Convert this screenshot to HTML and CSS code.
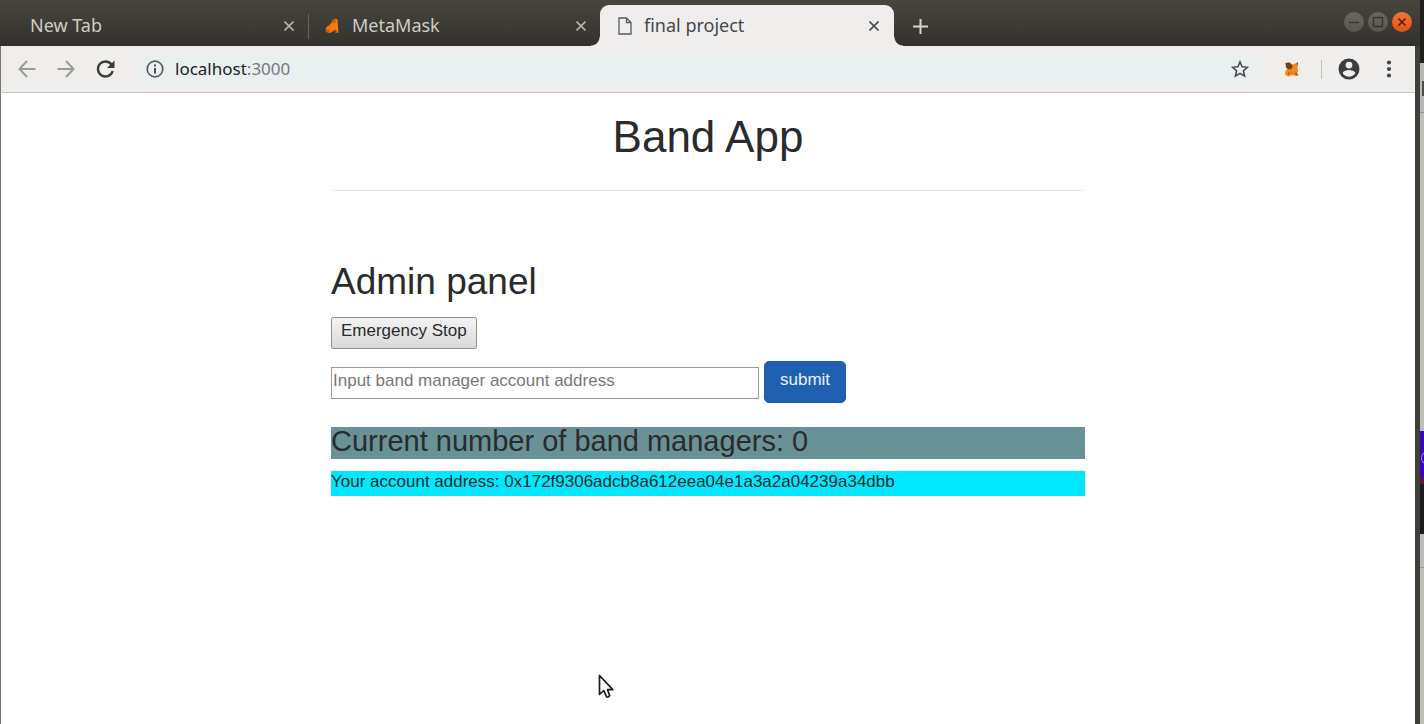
FILE: index.html
```html
<!DOCTYPE html>
<html lang="en">
<head>
<meta charset="utf-8">
<title>final project</title>
<link rel="stylesheet" href="styles.css">
</head>
<body>
<div class="desktop">
  <div class="window">
    <header class="titlebar">
      <nav class="tabs" aria-label="Tabs">
        <div class="tab tab-first">
          <span class="tab-title">New Tab</span>
          <button class="tab-close" aria-label="Close New Tab"><svg width="10" height="10" viewBox="0 0 10 10"><path d="M.5.5l9 9M9.5.5l-9 9"/></svg></button>
        </div>
        <div class="tab tab-divided">
          <svg class="favicon" width="16" height="16" viewBox="0 0 16 16"><path fill="#f57c0a" d="M11.500.5l2 1 .5 7 .5 6.500-3-.5-2.500-1.500-3 2-4-1-.5-3 2-3 4-3 1.500-3z"/><path fill="#c65a0a" d="M11.500.5L8 2.500 7 5.500l5-1zM2 11l4 1-1 2.500-3-1z"/><path fill="#7a3a10" d="M9 13l2-1.500 2.500 3-2.500-.5zM3.500 8l2-1.500.5 1.500z"/></svg>
          <span class="tab-title">MetaMask</span>
          <button class="tab-close" aria-label="Close MetaMask"><svg width="10" height="10" viewBox="0 0 10 10"><path d="M.5.5l9 9M9.5.5l-9 9"/></svg></button>
        </div>
        <div class="tab tab-active">
          <svg class="favicon" width="14" height="18" viewBox="0 0 14 18"><path fill="none" stroke="#5a5a5c" stroke-width="1.300" d="M1 1h7.500L13 5.500V17H1zM8.500 1v4.500H13"/></svg>
          <span class="tab-title">final project</span>
          <button class="tab-close" aria-label="Close final project"><svg width="10" height="10" viewBox="0 0 10 10"><path d="M.5.5l9 9M9.5.5l-9 9"/></svg></button>
        </div>
      </nav>
      <button class="new-tab" aria-label="New tab"><svg width="15" height="15" viewBox="0 0 15 15"><path stroke="#d8d6ce" stroke-width="2" d="M7.500 0v15M0 7.500h15"/></svg></button>
      <div class="window-controls">
        <button class="control" aria-label="Minimize"><svg width="20" height="20" viewBox="0 0 20 20"><path stroke="#34332e" stroke-width="1.300" d="M5 10.500h10"/></svg></button>
        <button class="control" aria-label="Maximize"><svg width="20" height="20" viewBox="0 0 20 20"><path fill="none" stroke="#34332e" stroke-width="1.400" d="M5.500 5.500h9v9h-9z"/></svg></button>
        <button class="control control-close" aria-label="Close window"><svg width="20" height="20" viewBox="0 0 20 20"><path stroke="#4a2114" stroke-width="1.600" d="M6.500 6.500l7 7M13.500 6.500l-7 7"/></svg></button>
      </div>
    </header>
    <div class="toolbar">
      <button class="tool" aria-label="Back"><svg width="18" height="18" viewBox="0 0 18 18"><path fill="none" stroke="#9a9a99" stroke-width="2" d="M17.500 9H2M9 1L1.500 9 9 17"/></svg></button>
      <button class="tool" aria-label="Forward"><svg width="18" height="18" viewBox="0 0 18 18"><path fill="none" stroke="#9a9a99" stroke-width="2" d="M.5 9H16M9 1l7.500 8L9 17"/></svg></button>
      <button class="tool" aria-label="Reload"><svg width="19" height="18" viewBox="0 0 19 18"><path fill="none" stroke="#3b3b3a" stroke-width="2.400" d="M15.500 4.500A7.500 7.500 0 1 0 16.700 11"/><path fill="#3b3b3a" d="M18.500.5v7.500H11z"/></svg></button>
      <div class="address">
        <svg class="info" width="18" height="18" viewBox="0 0 18 18"><circle cx="9" cy="9" r="7.800" fill="none" stroke="#5a5b5d" stroke-width="1.700"/><path stroke="#4b4c4e" stroke-width="2" d="M9 8v5.500M9 4.500v2"/></svg>
        <a class="url" href="#"><span class="url-host">localhost</span>:3000</a>
        <button class="tool star" aria-label="Bookmark"><svg width="18" height="18" viewBox="0 0 18 18"><path fill="none" stroke="#4c4d4f" stroke-width="1.600" d="M9 1.800l2.100 5 5.400.5-4.100 3.600 1.200 5.300L9 13.400l-4.600 2.800 1.200-5.300L1.500 7.300l5.400-.5z"/></svg></button>
      </div>
      <button class="tool" aria-label="MetaMask"><svg width="16" height="16" viewBox="0 0 16 16"><path fill="#f5841f" d="M1.500 2l4-.5 3 2 5.500-2-.5 6 .5 3-1 1 1.500 3.500-4-.5-3-.5-3 1.500-3-1.500-.5-3 2-3z"/><path fill="#763d16" d="M1.500 2l4-.5 3 3-.5 3-3 1-3-2zM12.500 2l1.500-.5-.5 3z"/><path fill="#c65a0a" d="M4 11l3 1.500-3 1.500zM11 11.500l2 0 1 3-3-.5z"/></svg></button>
      <span class="divider"></span>
      <button class="tool" aria-label="Profile"><svg width="22" height="22" viewBox="0 0 22 22"><path fill="#3c3c3e" fill-rule="evenodd" d="M11 .5a10.500 10.500 0 1 0 0 21 10.500 10.500 0 0 0 0-21zm0 3.200a3.400 3.400 0 1 1 0 6.800 3.400 3.400 0 0 1 0-6.800zm0 15c-2.600 0-4.900-1.300-6.300-3.400.1-2 4.200-3.200 6.300-3.200s6.200 1.200 6.300 3.200c-1.400 2.100-3.700 3.400-6.300 3.400z"/></svg></button>
      <button class="tool menu" aria-label="Menu"><svg width="6" height="18" viewBox="0 0 6 18"><g fill="#454546"><circle cx="3" cy="2.500" r="2.100"/><circle cx="3" cy="9" r="2.100"/><circle cx="3" cy="15.500" r="2.100"/></g></svg></button>
    </div>
    <main class="page">
      <div class="container">
        <h1 class="title">Band App</h1>
        <hr class="rule">
        <h2 class="panel-title">Admin panel</h2>
        <button class="stop">Emergency Stop</button>
        <form class="manager-form">
          <input class="manager-input" type="text" aria-label="Band manager account address" placeholder="Input band manager account address">
          <button class="submit" type="button">submit</button>
        </form>
        <h3 class="count">Current number of band managers: 0</h3>
        <p class="account">Your account address: 0x172f9306adcb8a612eea04e1a3a2a04239a34dbb</p>
      </div>
    </main>
  </div>
  <aside class="behind">
    <div class="behind-title"></div>
    <div class="behind-bar"><span class="behind-mark"></span></div>
    <div class="behind-gray"></div>
    <div class="behind-purple"><span class="behind-ring"></span></div>
    <div class="behind-maroon"></div>
    <div class="behind-black"></div>
    <div class="behind-light"></div>
    <div class="behind-rest"></div>
  </aside>
  <svg class="cursor" width="16" height="26" viewBox="0 0 16 26"><path fill="#fff" stroke="#1b1b1b" stroke-width="1.700" stroke-linejoin="round" d="M1.500 1.500v19l4.300-4 2.700 6.200q1.500 1.200 3.200-1.200L9.500 15.700h5.300z"/></svg>
</div>
</body>
</html>
```
FILE: styles.css
```css
* { box-sizing: border-box; }
body { margin: 0; background: #fff; color: #292b2c; font-family: "Liberation Sans", Arial, sans-serif; font-size: 17px; }
button { margin: 0; padding: 0; border: 0; background: none; color: inherit; font: inherit; }
svg { display: block; flex: none; }

.desktop { position: relative; display: flex; min-height: 100vh; }
.window { flex: 1; display: flex; flex-direction: column; border-right: 5px solid #403f39; background: #fff; }

.titlebar { display: flex; align-items: flex-end; height: 46px; margin-right: -5px; background: linear-gradient(#47463e, #32312d); font-family: "Noto Sans", "Open Sans", sans-serif; }
.tabs { display: flex; flex: 0 1 894px; }
.tab { position: relative; display: flex; align-items: center; flex: 1; height: 41px; padding: 0 14px 0 16px; color: #cfcdc4; }
.tab-first { flex: 0 0 308px; padding-left: 30px; }
.tab-divided { flex: 0 0 292px; }
.tab-divided::before { content: ""; position: absolute; left: 0; top: 9px; width: 1px; height: 25px; background: #67665f; }
.tab-title { flex: 1; padding-bottom: 2px; font-size: 18px; line-height: 24px; white-space: nowrap; }
.favicon { margin-right: 12px; }
.tab-close { color: #b5b3ab; }
.tab-close svg { fill: none; stroke: currentColor; stroke-width: 1.6; }
.tab-active { padding: 0 15px 0 18px; border-radius: 9px 9px 0 0; background: #efeeec; color: #45464b; }
.tab-active .tab-close { color: #4a4a4c; }
.tab-active::before, .tab-active::after { content: ""; position: absolute; bottom: 0; width: 9px; height: 9px; }
.tab-active::before { right: 100%; background: radial-gradient(circle at 0 0, transparent 8px, #efeeec 9px); }
.tab-active::after { left: 100%; background: radial-gradient(circle at 100% 0, transparent 8px, #efeeec 9px); }
.new-tab { margin: 0 auto 12px 19px; }
.window-controls { display: flex; gap: 4px; margin: 0 8px 14px 0; }
.control { width: 20px; height: 20px; border-radius: 50%; background: linear-gradient(#68675f, #57564f); }
.control-close { background: linear-gradient(#f6743f, #e9500f); }

.toolbar { display: flex; align-items: center; height: 47px; padding: 0 23px 0 17px; gap: 21px; border-left: 1px solid #77766f; border-bottom: 1px solid #c4c4c1; background: #efeeec; font-family: "Noto Sans", "Open Sans", sans-serif; }
.address { display: flex; align-items: center; flex: 1; height: 34px; padding: 0 14px 0 10px; border-radius: 17px; background: #eaeff0; }
.url { flex: 1; margin-left: 11px; color: #75787b; font-size: 17px; line-height: 24px; text-decoration: none; }
.url-host { color: #202224; }
.divider { width: 1px; height: 19px; margin-right: -5px; background: #c2c2c0; }
.menu { margin-left: 5px; }

.page { flex: 1; border-left: 1px solid #77766f; }
.container { width: 754px; max-width: 100%; margin: 0 auto; }
.title { margin: 17px 0 0; font-size: 44px; font-weight: 400; line-height: 54px; text-align: center; }
.rule { margin: 26px 0 0; border: 0; border-top: 1px solid #e6e6e6; }
.panel-title { margin: 69px 0 0; font-size: 37px; font-weight: 400; line-height: 44px; }
.stop { display: block; height: 32px; margin-top: 13px; padding: 0 9px 4px; border: 1px solid #929292; border-radius: 2px; background: linear-gradient(#f3f3f3, #d9d9d9); }
.manager-form { display: flex; align-items: center; gap: 5px; margin-top: 12px; }
.manager-input { flex: 0 1 428px; min-width: 0; height: 32px; margin-top: 2px; padding: 0 1px 4px; border: 1px solid #999; background: #fff; color: #292b2c; font: inherit; }
.manager-input::placeholder { color: #777; opacity: 1; }
.submit { height: 42px; padding: 0 15px 4px; border: 1px solid #1b5ba8; border-radius: 5px; background: #1f61b0; color: #eaf1fa; }
.count { margin: 24px 0 0; padding-bottom: 4px; background: #689295; font-size: 29px; font-weight: 400; line-height: 28px; }
.account { margin: 12px 0 0; padding-bottom: 4px; background: #00e8ff; line-height: 21px; overflow-wrap: anywhere; }

.behind { display: flex; flex-direction: column; flex: 0 0 4px; overflow: hidden; background: #bfbfbb; }
.behind-title { height: 63px; background: #1f201d; }
.behind-bar { height: 50px; padding: 18px 0 0 2px; border-bottom: 1px solid #939393; background: #b8b8b8; }
.behind-mark { display: block; width: 2px; height: 15px; background: #4d4d4f; }
.behind-gray { height: 318px; }
.behind-purple { height: 47px; padding: 21px 0 0 1px; background: #3708b5; }
.behind-ring { display: block; width: 10px; height: 12px; border: 1px solid #9a83dc; border-radius: 50%; }
.behind-maroon { height: 6px; background: #5c1741; }
.behind-black { height: 50px; background: #1c1b1d; }
.behind-light { height: 34px; border-bottom: 1px solid #999; background: #bcbcbc; }
.behind-rest { flex: 1; }

.cursor { position: absolute; left: 598px; top: 674px; }
```
